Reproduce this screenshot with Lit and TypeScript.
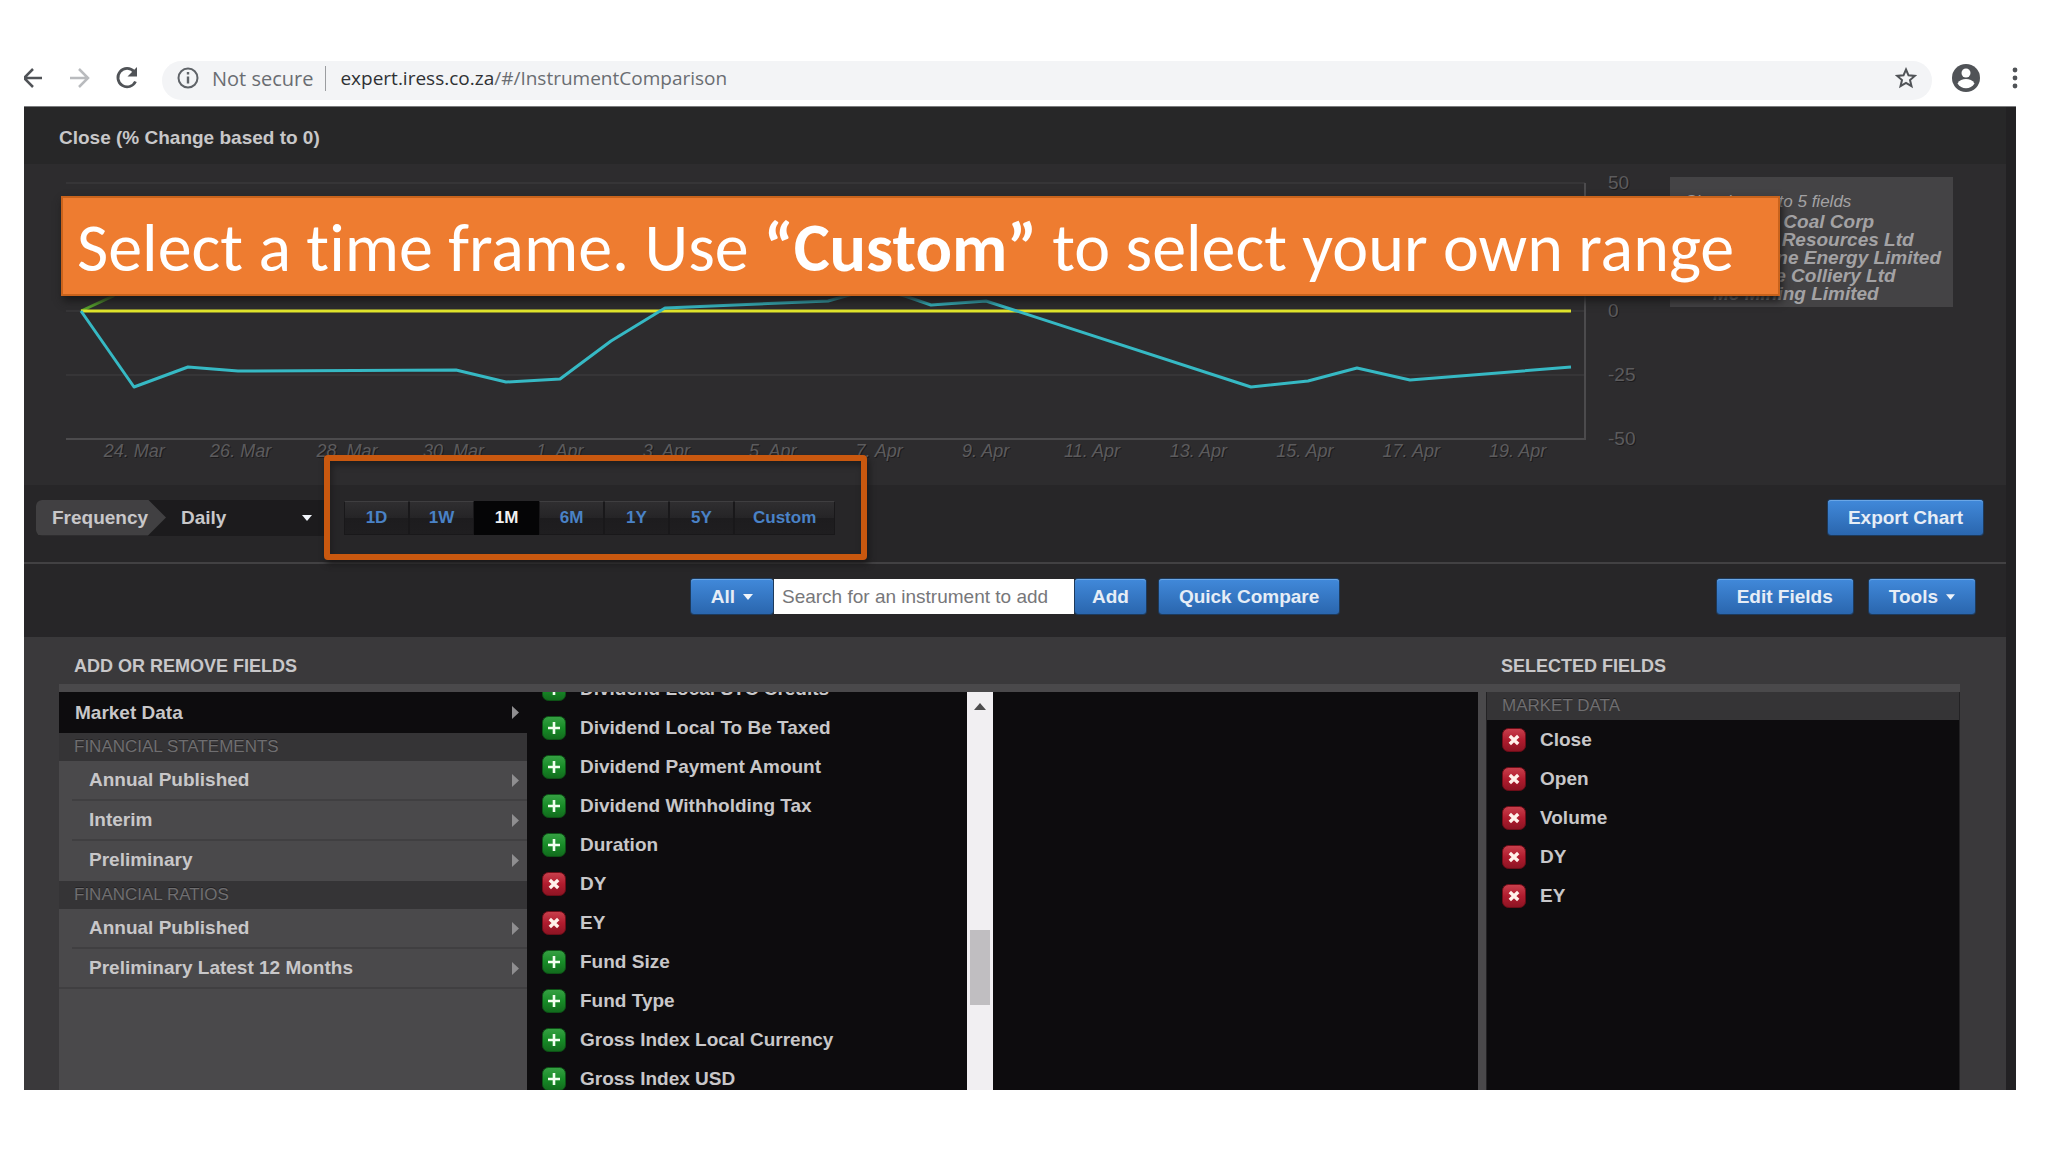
import { LitElement, html, css, svg } from "lit";
import { customElement, property, state } from "lit/decorators.js";
import { classMap } from "lit/directives/class-map.js";

type Entry = { name: string; selected: boolean };

@customElement("field-icon")
export class FieldIcon extends LitElement {
  @property({ type: Boolean }) remove = false;

  static styles = css`
    :host { display: block; width: 24px; height: 24px; }
    svg { display: block; width: 24px; height: 24px; }
  `;

  render() {
    return this.remove
      ? html`<svg viewBox="0 0 24 24" aria-hidden="true">
          <defs><linearGradient id="r" x1="0" y1="0" x2="0" y2="1"><stop offset="0" stop-color="#c9414d" /><stop offset=".5" stop-color="#b01c2e" /><stop offset="1" stop-color="#8c1423" /></linearGradient></defs>
          <rect x=".5" y=".5" width="23" height="23" rx="6" fill="url(#r)" stroke="#6d0d18" />
          <path d="M7.8 8l8.4 8M16.2 8l-8.4 8" stroke="#fff1ea" stroke-width="3.4" />
        </svg>`
      : html`<svg viewBox="0 0 24 24" aria-hidden="true">
          <defs><linearGradient id="g" x1="0" y1="0" x2="0" y2="1"><stop offset="0" stop-color="#37a144" /><stop offset=".5" stop-color="#178c27" /><stop offset="1" stop-color="#126a1d" /></linearGradient></defs>
          <rect x=".5" y=".5" width="23" height="23" rx="6" fill="url(#g)" stroke="#0d5216" />
          <path d="M12 6v12M6 12h12" stroke="#f2fff0" stroke-width="2.6" />
        </svg>`;
  }
}

@customElement("price-chart")
export class PriceChart extends LitElement {
  private days = ["24. Mar", "26. Mar", "28. Mar", "30. Mar", "1. Apr", "3. Apr", "5. Apr", "7. Apr", "9. Apr", "11. Apr", "13. Apr", "15. Apr", "17. Apr", "19. Apr"];
  private scale = ["50", "25", "0", "-25", "-50"];
  private names = ["Buffalo Coal Corp", "Exxaro Resources Ltd", "Firestone Energy Limited", "Hwange Colliery Ltd", "Mc Mining Limited"];

  static styles = css`
    :host { display: flex; font-family: "Liberation Sans", Arial, sans-serif; font-weight: normal; }
    .plot { flex: 1; min-width: 0; }
    .plot svg { display: block; width: 100%; height: 256px; overflow: visible; }
    .days { display: flex; padding: 0 14px 0 15px; }
    .day { flex: 1; text-align: center; font-size: 18px; line-height: 24px; font-style: italic; color: #5c5b5d; text-shadow: 1px 1px #1c1b1d; }
    .scale { width: 85px; height: 276px; box-sizing: border-box; margin: -10px 0; padding-left: 23px; display: flex; flex-direction: column; justify-content: space-between; font-size: 19px; line-height: 20px; color: #5c5b5d; text-shadow: 1px 1px #1c1b1d; }
    .legend { width: 283px; height: 130px; box-sizing: border-box; margin-top: -6px; padding: 15px 0 0 15px; background: #444345; color: #a3a2a4; font-style: italic; }
    .hint { font-size: 17px; line-height: 20px; }
    .names { margin: 1px 0 0; padding: 0 0 0 28px; list-style: none; font-size: 19px; line-height: 18px; font-weight: bold; white-space: nowrap; }
  `;

  render() {
    return html`
      <div class="plot">
        <svg viewBox="66 183 1519 256" preserveAspectRatio="none" role="img" aria-label="Close price change">
          ${[183, 247, 311, 375].map((y) => svg`<path d="M66 ${y}H1585" stroke="#363537" stroke-width="2" />`)}
          <path d="M66 439H1585V183" fill="none" stroke="#4c4b4d" stroke-width="2" />
          <path d="M81 311L113 296L140 270" fill="none" stroke="#55a02c" stroke-width="3" />
          <path d="M81 311H1571" stroke="#e0e42c" stroke-width="3" />
          <path d="M81 311L134 387L188 367L238 371L456 370L506 382L560 379L611 341L665 308L828 301L874 288L905 296L931 305L986 301L1251 387L1308 381L1357 368L1410 380L1571 367" fill="none" stroke="#36b9c4" stroke-width="3" stroke-linejoin="round" />
        </svg>
        <div class="days">${this.days.map((d) => html`<span class="day">${d}</span>`)}</div>
      </div>
      <div class="scale">${this.scale.map((v) => html`<span>${v}</span>`)}</div>
      <div class="legend">
        <div class="hint">Showing up to 5 fields</div>
        <ul class="names">${this.names.map((n) => html`<li>${n}</li>`)}</ul>
      </div>
    `;
  }
}

@customElement("app-root")
export class AppRoot extends LitElement {
  @state() private range = "1M";
  private ranges = ["1D", "1W", "1M", "6M", "1Y", "5Y", "Custom"];
  private fields: Entry[] = [
    ["Dividend Local STC Credits", false], ["Dividend Local To Be Taxed", false], ["Dividend Payment Amount", false],
    ["Dividend Withholding Tax", false], ["Duration", false], ["DY", true], ["EY", true], ["Fund Size", false],
    ["Fund Type", false], ["Gross Index Local Currency", false], ["Gross Index USD", false],
  ].map(([name, selected]) => ({ name, selected }) as Entry);
  private groups = [
    { title: "FINANCIAL STATEMENTS", items: ["Annual Published", "Interim", "Preliminary"] },
    { title: "FINANCIAL RATIOS", items: ["Annual Published", "Preliminary Latest 12 Months"] },
  ];

  static styles = css`
    :host { display: flex; flex-direction: column; height: 100vh; min-height: 900px; box-sizing: border-box; padding: 61px 32px 62px 24px; background: #fff; color: #c8c7c9; font-family: "Liberation Sans", Arial, sans-serif; font-size: 19px; font-weight: bold; }
    button, input, select { font: inherit; color: inherit; margin: 0; border: 0; border-radius: 0; padding: 0; background: none; }
    button { cursor: pointer; }
    svg { display: block; flex: none; }

    .browser { flex: none; display: flex; align-items: stretch; height: 39px; padding-bottom: 6px; color: #6a6d72; font-family: "Open Sans", "Noto Sans", sans-serif; font-weight: normal; }
    .nav, .address, .tools { display: flex; align-items: center; box-sizing: border-box; padding-bottom: 5px; }
    .nav { gap: 23px; width: 138px; }
    .address { flex: 1; padding-left: 14px; padding-right: 15px; border-radius: 20px; background: #f3f4f6; font-size: 20px; white-space: nowrap; }
    .insecure { margin-left: 12px; padding-right: 12px; border-right: 1px solid #9b9da0; line-height: 25px; }
    .url { flex: 1; margin-left: 14px; font-size: 19px; }
    .url b { font-weight: normal; color: #2f3134; }
    .tools { gap: 32px; padding-left: 20px; margin-right: -2px; }

    .frame { flex: 1; display: flex; flex-direction: column; min-height: 0; padding-right: 10px; background: #222123; border-top: 1px solid #7b7c7e; }
    .title { flex: none; margin: 0; padding: 4px 35px 0; font-size: 19px; line-height: 53px; background: #272728; }
    .chart { flex: none; position: relative; background: #2d2c2e; padding: 19px 53px 22px 42px; }
    .banner { position: absolute; left: 37px; right: 226px; top: 32px; height: 100px; box-sizing: border-box; padding-left: 14px; border: 2px solid #c9631c; background: #ee7c30; color: #fff; font-family: Carlito, Lato, sans-serif; font-size: 68px; font-weight: normal; font-variant-ligatures: none; line-height: 100px; white-space: nowrap; box-shadow: 2px 5px 8px #1a191a; }

    .controls { flex: none; display: flex; align-items: center; height: 79px; box-sizing: border-box; padding: 0 23px 12px 12px; background: #272628; border-bottom: 2px solid #424143; }
    .frequency { display: flex; width: 294px; height: 36px; background: #1c1b1d; border-radius: 6px; line-height: 36px; }
    .frequency label { width: 130px; box-sizing: border-box; padding-left: 16px; background: #414042; border-radius: 6px 0 0 6px; clip-path: polygon(0 0, 112px 0, 100% 50%, 112px 100%, 0 100%); }
    .pick { flex: 1; display: flex; align-items: center; padding-right: 18px; }
    .pick select { flex: 1; appearance: none; padding-left: 15px; height: 36px; }
    .ranges { position: relative; display: flex; margin-left: 14px; }
    .range { min-width: 65px; height: 34px; padding: 0 18px; background: linear-gradient(#2f2e30, #252426 50%, #1d1c1e 50%, #1f1e20); border: 1px solid #19181a; border-top-color: #3f3e40; font-size: 17px; color: #4a82c6; }
    .range.on { background: #050506; border-color: #050506; color: #f2f2f2; }
    .ring { position: absolute; inset: -46px -32px -25px -20px; border: 6px solid #c9580f; border-radius: 4px; box-shadow: 2px 4px 6px #1a191a, inset 2px 4px 6px #1f1e1f; pointer-events: none; }
    .push { margin-left: auto; }
    .blue { height: 35px; padding: 0 20px; display: flex; align-items: center; gap: 8px; border-radius: 3px; background: linear-gradient(#4189da, #2a66ae); box-shadow: inset 0 1px #6aa6e6, 0 0 0 1px #1d3a5c; color: #e6edf6; white-space: nowrap; }
    .slim { padding: 0 17px; }

    .search { flex: none; display: grid; grid-template-columns: 1fr auto 1fr; align-items: center; height: 73px; padding: 0 31px 8px; box-sizing: border-box; background: #272628; }
    .finder { grid-column: 2; display: flex; gap: 1px; }
    .finder input { width: 300px; height: 35px; box-sizing: border-box; padding: 0 8px; background: #fff; color: #333; font-weight: normal; font-size: 19px; }
    .finder input::placeholder { color: #77777a; opacity: 1; }
    .compare { margin-left: 12px; }
    .edit { display: flex; justify-content: flex-end; gap: 16px; }

    .panel { flex: 1; min-height: 0; display: grid; grid-template-columns: 1fr 474px; grid-template-rows: 47px 8px minmax(0, 1fr); padding: 0 46px 0 35px; background: #3a393b; }
    h2 { margin: 0; font-size: 18px; line-height: 59px; padding-left: 15px; }
    .rule { grid-column: 1 / -1; background: #4a494b; }
    .browse { display: grid; grid-template-columns: 468px 440px 26px 1fr; grid-template-rows: minmax(0, 1fr); min-height: 0; background: #0d0c0e; border-right: 8px solid #4a494b; }
    .tree { background: #4a494b; display: flex; flex-direction: column; }
    .node { display: flex; align-items: center; justify-content: space-between; height: 41px; padding: 0 8px 0 16px; text-align: left; }
    .node.on { background: #0d0c0e; }
    .child { height: 40px; margin-left: 13px; padding-left: 17px; border-bottom: 2px solid #403f41; }
    .child.last { border-bottom-color: transparent; }
    .child.end { margin-left: 0; padding-left: 30px; }
    .head { margin: 0; padding-left: 15px; background: #353436; color: #6f6e70; font-size: 17px; font-weight: normal; line-height: 28px; text-shadow: 0 -1px #232224; }
    .fields { margin: 0; padding: 0 0 0 15px; list-style: none; overflow: hidden; }
    .fields li { display: flex; align-items: center; gap: 14px; height: 39px; white-space: nowrap; }
    .browse .fields li:first-child { margin-top: -23px; }
    .bar { background: #f1eff2; display: flex; flex-direction: column; align-items: center; padding-top: 11px; }
    .thumb { width: 20px; height: 75px; margin-top: 220px; background: #c0bec1; }
    .selected { background: #0d0c0e; min-height: 0; border-left: 1px solid #232224; border-right: 1px solid #232224; }
  `;

  private caret(w: number, h: number) {
    return html`<svg width=${w} height=${h} viewBox="0 0 10 6" aria-hidden="true"><path d="M0 0h10L5 6z" fill="#f1f5fa" /></svg>`;
  }

  private arrow() {
    return html`<svg width="8" height="13" viewBox="0 0 8 13" aria-hidden="true"><path d="M1 0l7 6.500l-7 6.500z" fill="#8f8e90" /></svg>`;
  }

  private list(items: Entry[]) {
    return html`<ul class="fields">${items.map((f) => html`
      <li><button aria-label="${f.selected ? "Remove" : "Add"} ${f.name}"><field-icon ?remove=${f.selected}></field-icon></button><span>${f.name}</span></li>`)}</ul>`;
  }

  render() {
    return html`
      <header class="browser">
        <div class="nav">
          <svg width="20" height="24" viewBox="0 0 20 24" fill="none" stroke="#505357" stroke-width="2.500"><path d="M18 12H1M9 3l-9 9l9 9" /></svg>
          <svg width="24" height="24" viewBox="0 0 24 24" fill="none" stroke="#b9bbbe" stroke-width="2.500"><path d="M3 12h18M12 3l9 9l-9 9" /></svg>
          <svg width="26" height="24" viewBox="0 0 26 24" fill="none" stroke="#505357" stroke-width="2.800"><path d="M21.500 15.500A9.200 9.200 0 1 1 20 5.500" /><path d="M23 1v9.500h-9.500z" fill="#505357" stroke="none" /></svg>
        </div>
        <div class="address">
          <svg width="24" height="24" viewBox="0 0 24 24" fill="none" stroke="#5f6368" stroke-width="2"><circle cx="12" cy="12" r="9.500" /><path d="M12 10.500v7M12 6v2.500" stroke-width="2.400" /></svg>
          <span class="insecure">Not secure</span>
          <span class="url"><b>expert.iress.co.za</b>/#/InstrumentComparison</span>
          <svg width="22" height="22" viewBox="0 0 22 22" fill="none" stroke="#505357" stroke-width="2"><path d="M11 2.500l2.500 5.800l6.300.6l-4.800 4.100l1.500 6.200l-5.500-3.300l-5.500 3.300l1.500-6.200l-4.800-4.100l6.300-.6z" /></svg>
        </div>
        <div class="tools">
          <svg width="28" height="28" viewBox="0 0 28 28"><circle cx="14" cy="14" r="14" fill="#505357" /><circle cx="14" cy="9" r="4.500" fill="#fff" /><path d="M5.500 19.500c2-3.500 5-4.500 8.500-4.500s6.500 1 8.500 4.500a10 10 0 0 1-17 0z" fill="#fff" /></svg>
          <svg width="6" height="22" viewBox="0 0 6 22" fill="#505357"><circle cx="3" cy="3" r="2.400" /><circle cx="3" cy="11" r="2.400" /><circle cx="3" cy="19" r="2.400" /></svg>
        </div>
      </header>

      <main class="frame">
        <h1 class="title">Close (% Change based to 0)</h1>
        <section class="chart">
          <price-chart></price-chart>
          <div class="banner">Select a time frame. Use <b>“Custom”</b> to select your own range</div>
        </section>

        <section class="controls">
          <div class="frequency">
            <label for="freq">Frequency</label>
            <div class="pick"><select id="freq"><option>Daily</option></select>${this.caret(10, 6)}</div>
          </div>
          <div class="ranges">
            ${this.ranges.map((r) => html`<button class=${classMap({ range: true, on: r === this.range })} @click=${() => (this.range = r)}>${r}</button>`)}
            <div class="ring"></div>
          </div>
          <button class="blue push">Export Chart</button>
        </section>

        <section class="search">
          <div class="finder">
            <button class="blue">All ${this.caret(10, 6)}</button>
            <input type="text" aria-label="Search for an instrument" placeholder="Search for an instrument to add" />
            <button class="blue slim">Add</button>
            <button class="blue compare">Quick Compare</button>
          </div>
          <div class="edit">
            <button class="blue">Edit Fields</button>
            <button class="blue">Tools ${this.caret(9, 6)}</button>
          </div>
        </section>

        <section class="panel">
          <h2>ADD OR REMOVE FIELDS</h2>
          <h2>SELECTED FIELDS</h2>
          <div class="rule"></div>
          <div class="browse">
            <nav class="tree">
              <button class="node on">Market Data ${this.arrow()}</button>
              ${this.groups.map((g, gi) => html`
                <h3 class="head">${g.title}</h3>
                ${g.items.map((item, i) => {
                  const last = i === g.items.length - 1;
                  return html`<button class=${classMap({ node: true, child: true, last: last && gi === 0, end: last && gi === 1 })}>${item} ${this.arrow()}</button>`;
                })}`)}
            </nav>
            ${this.list(this.fields)}
            <div class="bar">
              <svg width="12" height="7" viewBox="0 0 12 7" aria-hidden="true"><path d="M0 7l6-7l6 7z" fill="#4d4c4e" /></svg>
              <div class="thumb"></div>
            </div>
          </div>
          <div class="selected">
            <h3 class="head">MARKET DATA</h3>
            ${this.list(["Close", "Open", "Volume", "DY", "EY"].map((name) => ({ name, selected: true })))}
          </div>
        </section>
      </main>
    `;
  }
}
